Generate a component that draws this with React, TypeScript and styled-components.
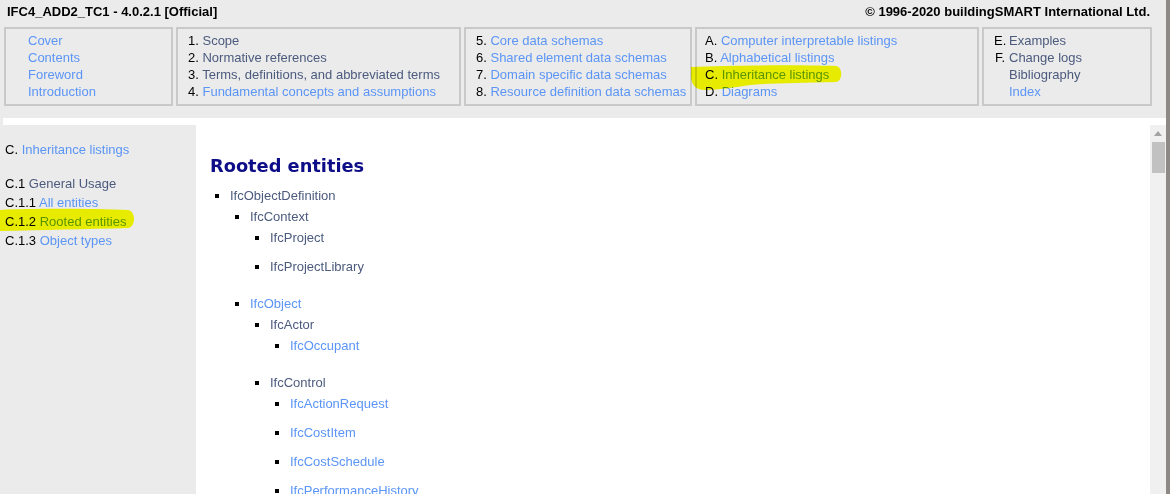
import React from "react";
import styled, { createGlobalStyle } from "styled-components";

const GlobalStyle = createGlobalStyle`
  html, body {
    margin: 0;
    padding: 0;
  }
  body {
    font-family: "Liberation Sans", Arial, sans-serif;
    font-size: 13px;
    color: #000;
    background: #ebebeb;
  }
`;

const LINK = "#5b95f6";
const PLAIN = "#4b5a7d";

const Screen = styled.div`
  display: flex;
  width: 1170px;
  height: 494px;
  overflow: hidden;
  background: #ebebeb;
`;

const Window = styled.div`
  flex: 1;
  min-width: 0;
  display: flex;
  flex-direction: column;
`;

const Edge = styled.div`
  width: 4px;
  flex: none;
  background: #8d8986;
`;

const TopBar = styled.div`
  display: flex;
  justify-content: space-between;
  padding: 3px 16px 0 7px;
  line-height: 17px;
  font-weight: bold;
  white-space: nowrap;
`;

const NavGrid = styled.div`
  display: grid;
  grid-template-columns: 169px 285px 228px 284px 170px;
  column-gap: 3px;
  margin: 7px 0 12px 4px;
`;

const NavBox = styled.div<{ $pl: number }>`
  position: relative;
  box-sizing: border-box;
  height: 79px;
  border: 2px solid #c9c9c9;
  padding: 3px 4px 4px ${(p) => p.$pl}px;
  line-height: 17px;
  white-space: nowrap;
`;

const NavLine = styled.div`
  display: block;
`;

const Prefix = styled.span<{ $w?: number }>`
  color: #000;
  ${(p) =>
    p.$w !== undefined
      ? `display: inline-block; width: ${p.$w}px; text-align: right; margin-right: 4px;`
      : ""}
`;

const Label = styled.span<{ $link?: boolean }>`
  color: ${(p) => (p.$link ? LINK : PLAIN)};
  cursor: ${(p) => (p.$link ? "pointer" : "default")};
`;

const Marker = styled.svg`
  position: absolute;
  pointer-events: none;
  mix-blend-mode: multiply;
  overflow: visible;
`;

const WhiteGap = styled.div`
  height: 7px;
  margin-left: 3px;
  background: #fff;
  flex: none;
`;

const Body = styled.div`
  flex: 1;
  display: flex;
  min-height: 0;
`;

const Sidebar = styled.div`
  position: relative;
  width: 196px;
  flex: none;
  box-sizing: border-box;
  padding: 15px 0 0 5px;
  line-height: 19px;
  white-space: nowrap;
`;

const SideTitle = styled.div`
  margin-bottom: 15px;
`;

const SideLine = styled.div``;

const Main = styled.div`
  flex: 1;
  min-width: 0;
  background: #fff;
  padding: 29px 0 0 14px;
  overflow: hidden;
`;

const Heading = styled.h2`
  margin: 0 0 7px;
  font-family: "DejaVu Sans", Verdana, sans-serif;
  font-size: 17.8px;
  line-height: 24px;
  font-weight: bold;
  color: #0d0d87;
`;

const Tree = styled.ul<{ $level: number }>`
  list-style: none;
  margin: 0;
  padding: 0 0 ${(p) => (p.$level > 0 ? 8 : 0)}px ${(p) => (p.$level === 0 ? 5 : 20)}px;
`;

const Item = styled.li``;

const Row = styled.div<{ $leaf: boolean }>`
  display: flex;
  align-items: center;
  height: 21px;
  padding-bottom: ${(p) => (p.$leaf ? 8 : 0)}px;
  white-space: nowrap;
`;

const Bullet = styled.span`
  flex: none;
  width: 4px;
  height: 4px;
  margin-right: 11px;
  background: #000;
`;

const Scrollbar = styled.div`
  width: 16px;
  flex: none;
  background: #f0f0f0;
  display: flex;
  flex-direction: column;
`;

const ArrowBox = styled.div`
  height: 17px;
  display: flex;
  align-items: center;
  justify-content: center;
`;

const Thumb = styled.div`
  height: 31px;
  margin: 0 1px 0 2px;
  background: #c1c1c1;
`;

type NavEntry = { prefix?: string; text: string; link?: boolean };

const navColumns: { pl: number; pw?: number; items: NavEntry[] }[] = [
  {
    pl: 22,
    items: [
      { text: "Cover", link: true },
      { text: "Contents", link: true },
      { text: "Foreword", link: true },
      { text: "Introduction", link: true },
    ],
  },
  {
    pl: 10,
    items: [
      { prefix: "1.", text: "Scope" },
      { prefix: "2.", text: "Normative references" },
      { prefix: "3.", text: "Terms, definitions, and abbreviated terms" },
      { prefix: "4.", text: "Fundamental concepts and assumptions", link: true },
    ],
  },
  {
    pl: 10,
    items: [
      { prefix: "5.", text: "Core data schemas", link: true },
      { prefix: "6.", text: "Shared element data schemas", link: true },
      { prefix: "7.", text: "Domain specific data schemas", link: true },
      { prefix: "8.", text: "Resource definition data schemas", link: true },
    ],
  },
  {
    pl: 8,
    items: [
      { prefix: "A.", text: "Computer interpretable listings", link: true },
      { prefix: "B.", text: "Alphabetical listings", link: true },
      { prefix: "C.", text: "Inheritance listings", link: true },
      { prefix: "D.", text: "Diagrams", link: true },
    ],
  },
  {
    pl: 10,
    pw: 11,
    items: [
      { prefix: "E.", text: "Examples" },
      { prefix: "F.", text: "Change logs" },
      { prefix: "", text: "Bibliography" },
      { prefix: "", text: "Index", link: true },
    ],
  },
];

type Entity = { name: string; link?: boolean; children?: Entity[] };

const tree: Entity[] = [
  {
    name: "IfcObjectDefinition",
    children: [
      {
        name: "IfcContext",
        children: [{ name: "IfcProject" }, { name: "IfcProjectLibrary" }],
      },
      {
        name: "IfcObject",
        link: true,
        children: [
          { name: "IfcActor", children: [{ name: "IfcOccupant", link: true }] },
          {
            name: "IfcControl",
            children: [
              { name: "IfcActionRequest", link: true },
              { name: "IfcCostItem", link: true },
              { name: "IfcCostSchedule", link: true },
              { name: "IfcPerformanceHistory", link: true },
            ],
          },
        ],
      },
    ],
  },
];

const EntityTree: React.FC<{ nodes: Entity[]; level: number }> = ({ nodes, level }) => (
  <Tree $level={level}>
    {nodes.map((n) => (
      <Item key={n.name}>
        <Row $leaf={!n.children}>
          <Bullet />
          <Label $link={n.link}>{n.name}</Label>
        </Row>
        {n.children && <EntityTree nodes={n.children} level={level + 1} />}
      </Item>
    ))}
  </Tree>
);

// yellow highlighter stroke over "C. Inheritance listings"
const NavHighlight = () => (
  <Marker width="152" height="28" style={{ left: -7, top: 35 }}>
    <path
      d="M1,3 C40,1 110,1 146,2 C153,3 153,17 146,18 C110,19 80,19 60,21 C45,23 30,26 15,26 C5,26 1,20 1,12 Z"
      fill="#fbff00"
    />
  </Marker>
);

// yellow highlighter stroke over "C.1.2 Rooted entities"
const SideHighlight = () => (
  <Marker width="136" height="24" style={{ left: 0, top: 83 }}>
    <path
      d="M0,2 C40,0 100,1 128,2 C136,3 136,19 128,20 C90,21 40,22 0,23 Z"
      fill="#fbff00"
    />
  </Marker>
);

export default function App() {
  return (
    <>
      <GlobalStyle />
      <Screen>
        <Window>
          <TopBar>
            <span>IFC4_ADD2_TC1 - 4.0.2.1 [Official]</span>
            <span>© 1996-2020 buildingSMART International Ltd.</span>
          </TopBar>
          <NavGrid>
            {navColumns.map((col, i) => (
              <NavBox key={i} $pl={col.pl}>
                {col.items.map((it) => (
                  <NavLine key={it.text}>
                    {it.prefix !== undefined && (
                      <Prefix $w={col.pw}>
                        {it.prefix}
                        {col.pw === undefined ? " " : ""}
                      </Prefix>
                    )}
                    <Label $link={it.link}>{it.text}</Label>
                  </NavLine>
                ))}
                {i === 3 && <NavHighlight />}
              </NavBox>
            ))}
          </NavGrid>
          <WhiteGap />
          <Body>
            <Sidebar>
              <SideTitle>
                C. <Label $link>Inheritance listings</Label>
              </SideTitle>
              <SideLine>
                C.1 <Label>General Usage</Label>
              </SideLine>
              <SideLine>
                C.1.1 <Label $link>All entities</Label>
              </SideLine>
              <SideLine>
                C.1.2 <Label $link>Rooted entities</Label>
              </SideLine>
              <SideLine>
                C.1.3 <Label $link>Object types</Label>
              </SideLine>
              <SideHighlight />
            </Sidebar>
            <Main>
              <Heading>Rooted entities</Heading>
              <EntityTree nodes={tree} level={0} />
            </Main>
            <Scrollbar>
              <ArrowBox>
                <svg width="8" height="5" viewBox="0 0 8 5">
                  <path d="M0,5 L4,0 L8,5 Z" fill="#a3a3a3" />
                </svg>
              </ArrowBox>
              <Thumb />
            </Scrollbar>
          </Body>
        </Window>
        <Edge />
      </Screen>
    </>
  );
}
